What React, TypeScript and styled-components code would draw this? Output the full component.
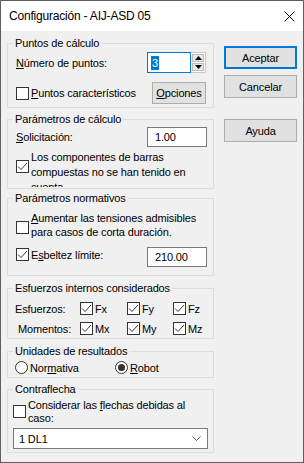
import React from 'react';
import styled, { createGlobalStyle } from 'styled-components';

const GlobalStyle = createGlobalStyle`
  html, body {
    margin: 0;
    padding: 0;
    background: #ffffff;
  }
  body {
    font-family: "Liberation Sans", Arial, sans-serif;
    font-size: 11px;
    letter-spacing: -0.15px;
    color: #000000;
  }
`;

const Window = styled.div`
  width: 304px;
  height: 463px;
  box-sizing: border-box;
  border: 1px solid #5f5f5f;
  background: #f0f0f0;
  display: flex;
  flex-direction: column;
`;

const TitleBar = styled.div`
  height: 30px;
  flex-shrink: 0;
  background: #ffffff;
  display: flex;
  align-items: center;
  justify-content: space-between;
  padding-left: 8px;
`;

const Title = styled.span`
  font-size: 12px;
  letter-spacing: -0.2px;
`;

const CloseBox = styled.div`
  width: 28px;
  height: 30px;
  display: flex;
  align-items: center;
  justify-content: center;
`;

const Body = styled.div`
  flex: 1;
  display: flex;
  gap: 10px;
  padding-left: 6px;
`;

const LeftCol = styled.div`
  width: 207px;
  display: flex;
  flex-direction: column;
`;

const RightCol = styled.div`
  width: 73px;
  display: flex;
  flex-direction: column;
`;

const Group = styled.div<{ $mt: number; $h: number }>`
  margin-top: ${(p) => p.$mt}px;
  height: ${(p) => p.$h}px;
  box-sizing: border-box;
  border: 1px solid #dcdcdc;
  display: flex;
  flex-direction: column;
`;

const Legend = styled.div`
  align-self: flex-start;
  height: 16px;
  line-height: 16px;
  margin: -9px 0 0 5px;
  padding: 0 2px;
  background: #f0f0f0;
  white-space: nowrap;
`;

const Row = styled.div<{ $mt?: number; $h?: number; $pl?: number; $pr?: number; $top?: boolean }>`
  display: flex;
  align-items: ${(p) => (p.$top ? 'flex-start' : 'center')};
  justify-content: space-between;
  margin-top: ${(p) => p.$mt ?? 0}px;
  height: ${(p) => (p.$h ? `${p.$h}px` : 'auto')};
  padding: 0 ${(p) => p.$pr ?? 0}px 0 ${(p) => p.$pl ?? 0}px;
`;

const GridRow = styled.div<{ $mt: number }>`
  display: grid;
  grid-template-columns: 65px 47px 46px 46px;
  align-items: center;
  height: 13px;
  margin-top: ${(p) => p.$mt}px;
  padding-left: 7px;
`;

const Label = styled.span<{ $ml?: number }>`
  white-space: nowrap;
  margin-left: ${(p) => p.$ml ?? 0}px;
`;

const CheckLabel = styled.div<{ $h?: number; $self?: string }>`
  display: flex;
  align-items: center;
  gap: 2px;
  height: ${(p) => (p.$h ? `${p.$h}px` : 'auto')};
  align-self: ${(p) => p.$self ?? 'auto'};
  white-space: nowrap;
`;

const MultiCheck = styled.div`
  display: flex;
  align-items: flex-start;
  gap: 2px;
`;

const Lines = styled.div<{ $lh: number; $clip?: number }>`
  line-height: ${(p) => p.$lh}px;
  white-space: nowrap;
  height: ${(p) => (p.$clip ? `${p.$clip}px` : 'auto')};
  overflow: hidden;
`;

const Box = styled.span<{ $mt?: number }>`
  width: 13px;
  height: 13px;
  box-sizing: border-box;
  flex-shrink: 0;
  border: 1px solid #333333;
  background: #ffffff;
  margin-top: ${(p) => p.$mt ?? 0}px;
  display: flex;
  align-items: center;
  justify-content: center;
`;

const RadioRing = styled.span`
  width: 13px;
  height: 13px;
  box-sizing: border-box;
  flex-shrink: 0;
  border: 1px solid #333333;
  border-radius: 50%;
  background: #ffffff;
  display: flex;
  align-items: center;
  justify-content: center;
`;

const RadioDot = styled.span`
  width: 7px;
  height: 7px;
  border-radius: 50%;
  background: #333333;
`;

const RadioItem = styled.div<{ $w?: number }>`
  display: flex;
  align-items: center;
  gap: 2px;
  width: ${(p) => (p.$w ? `${p.$w}px` : 'auto')};
`;

const RadioRow = styled.div`
  display: flex;
  height: 13px;
  margin-top: 2px;
  padding-left: 7px;
`;

const U = styled.span`
  text-decoration: underline;
  text-underline-offset: 1px;
`;

const Button = styled.div<{ $def?: boolean; $w?: number; $h?: number; $mt?: number }>`
  box-sizing: border-box;
  width: ${(p) => p.$w ?? 73}px;
  height: ${(p) => p.$h ?? 23}px;
  margin-top: ${(p) => p.$mt ?? 0}px;
  background: #e1e1e1;
  border: 1px solid ${(p) => (p.$def ? '#0078d7' : '#adadad')};
  box-shadow: ${(p) => (p.$def ? 'inset 0 0 0 1px #0078d7' : 'none')};
  display: flex;
  align-items: center;
  justify-content: center;
  white-space: nowrap;
`;

const Field = styled.div<{ $w: number }>`
  box-sizing: border-box;
  width: ${(p) => p.$w}px;
  height: 20px;
  border: 1px solid #7a7a7a;
  background: #ffffff;
  display: flex;
  align-items: center;
  padding-left: 7px;
`;

const Spinner = styled.div`
  display: flex;
  height: 21px;
`;

const SpinEdit = styled.div`
  box-sizing: border-box;
  width: 44px;
  height: 21px;
  border: 1px solid #0078d7;
  background: #ffffff;
  display: flex;
  align-items: center;
  padding-left: 3px;
`;

const Selected = styled.span`
  background: #0078d7;
  color: #ffffff;
  line-height: 14px;
  padding: 0 1px;
`;

const SpinButtons = styled.div`
  box-sizing: border-box;
  width: 15px;
  height: 21px;
  border: 1px solid #c9c9c9;
  border-left: none;
  background: #ffffff;
  display: flex;
  flex-direction: column;
  padding: 1px;
  gap: 1px;
`;

const SpinHalf = styled.div`
  flex: 1;
  background: #e8e8e8;
  border: 1px solid #bdbdbd;
  display: flex;
  align-items: center;
  justify-content: center;
`;

const Combo = styled.div`
  flex: 1;
  box-sizing: border-box;
  height: 21px;
  border: 1px solid #7a7a7a;
  background: #ffffff;
  display: flex;
  align-items: center;
  justify-content: space-between;
  padding: 0 6px 0 5px;
`;

const Check = () => (
  <svg width="11" height="11" viewBox="0 0 11 11">
    <polyline points="1,5.5 4,8.5 10,2" fill="none" stroke="#333" strokeWidth="1" />
  </svg>
);

const CheckBox = ({ checked, mt }: { checked?: boolean; mt?: number }) => (
  <Box $mt={mt}>{checked && <Check />}</Box>
);

const Arrow = ({ up }: { up?: boolean }) => (
  <svg width="7" height="4" viewBox="0 0 7 4">
    <polygon points={up ? '0,4 3.5,0 7,4' : '0,0 3.5,4 7,0'} fill="#000" />
  </svg>
);

const App = () => {
  return (
    <>
      <GlobalStyle />
      <Window>
        <TitleBar>
          <Title>Configuración - AIJ-ASD 05</Title>
          <CloseBox>
            <svg width="11" height="11" viewBox="0 0 11 11">
              <path d="M0.5 0.5 L10.5 10.5 M10.5 0.5 L0.5 10.5" stroke="#000" strokeWidth="1" />
            </svg>
          </CloseBox>
        </TitleBar>
        <Body>
          <LeftCol>
            <Group $mt={12} $h={65}>
              <Legend>Puntos de cálculo</Legend>
              <Row $mt={1} $h={21} $pl={8} $pr={7}>
                <Label>
                  <U>N</U>úmero de puntos:
                </Label>
                <Spinner>
                  <SpinEdit>
                    <Selected>3</Selected>
                  </SpinEdit>
                  <SpinButtons>
                    <SpinHalf>
                      <Arrow up />
                    </SpinHalf>
                    <SpinHalf>
                      <Arrow />
                    </SpinHalf>
                  </SpinButtons>
                </Spinner>
              </Row>
              <Row $mt={9} $h={22} $pl={8} $pr={7}>
                <CheckLabel>
                  <CheckBox />
                  <Label>
                    <U>P</U>untos característicos
                  </Label>
                </CheckLabel>
                <Button $w={54} $h={22}>
                  <U>O</U>pciones
                </Button>
              </Row>
            </Group>

            <Group $mt={11} $h={70}>
              <Legend>Parámetros de cálculo</Legend>
              <Row $h={20} $pl={8} $pr={6}>
                <Label>
                  <U>S</U>olicitación:
                </Label>
                <Field $w={60}>1.00</Field>
              </Row>
              <Row $mt={3} $pl={8} $top>
                <MultiCheck>
                  <CheckBox checked mt={10} />
                  <Lines $lh={15} $clip={37}>
                    Los componentes de barras
                    <br />
                    compuestas no se han tenido en
                    <br />
                    cuenta
                  </Lines>
                </MultiCheck>
              </Row>
            </Group>

            <Group $mt={9} $h={78}>
              <Legend>Parámetros normativos</Legend>
              <Row $mt={5} $pl={8} $top>
                <MultiCheck>
                  <CheckBox mt={10} />
                  <Lines $lh={14}>
                    <U>A</U>umentar las tensiones admisibles
                    <br />
                    para casos de corta duración.
                  </Lines>
                </MultiCheck>
              </Row>
              <Row $mt={8} $h={20} $pl={8} $pr={6} $top>
                <CheckLabel $h={15}>
                  <CheckBox checked />
                  <Label>
                    E<U>s</U>beltez límite:
                  </Label>
                </CheckLabel>
                <Field $w={60}>210.00</Field>
              </Row>
            </Group>

            <Group $mt={12} $h={51}>
              <Legend>Esfuerzos internos considerados</Legend>
              <GridRow $mt={6}>
                <Label>Esfuerzos:</Label>
                <CheckLabel>
                  <CheckBox checked />
                  <Label>Fx</Label>
                </CheckLabel>
                <CheckLabel>
                  <CheckBox checked />
                  <Label>Fy</Label>
                </CheckLabel>
                <CheckLabel>
                  <CheckBox checked />
                  <Label>Fz</Label>
                </CheckLabel>
              </GridRow>
              <GridRow $mt={7}>
                <Label $ml={3}>Momentos:</Label>
                <CheckLabel>
                  <CheckBox checked />
                  <Label>Mx</Label>
                </CheckLabel>
                <CheckLabel>
                  <CheckBox checked />
                  <Label>My</Label>
                </CheckLabel>
                <CheckLabel>
                  <CheckBox checked />
                  <Label>Mz</Label>
                </CheckLabel>
              </GridRow>
            </Group>

            <Group $mt={12} $h={27}>
              <Legend>Unidades de resultados</Legend>
              <RadioRow>
                <RadioItem $w={100}>
                  <RadioRing />
                  <Label>
                    Nor<U>m</U>ativa
                  </Label>
                </RadioItem>
                <RadioItem>
                  <RadioRing>
                    <RadioDot />
                  </RadioRing>
                  <Label>
                    <U>R</U>obot
                  </Label>
                </RadioItem>
              </RadioRow>
            </Group>

            <Group $mt={11} $h={64}>
              <Legend>Contraflecha</Legend>
              <Row $mt={2} $pl={5} $top>
                <MultiCheck>
                  <CheckBox mt={6} />
                  <Lines $lh={13}>
                    Considerar las <U>f</U>lechas debidas al
                    <br />
                    caso:
                  </Lines>
                </MultiCheck>
              </Row>
              <Row $mt={3} $pl={5} $pr={5}>
                <Combo>
                  <Label>1 DL1</Label>
                  <svg width="9" height="5" viewBox="0 0 9 5">
                    <polyline points="0.5,0.5 4.5,4.5 8.5,0.5" fill="none" stroke="#555" strokeWidth="1" />
                  </svg>
                </Combo>
              </Row>
            </Group>
          </LeftCol>

          <RightCol>
            <Button $def $mt={15}>
              Aceptar
            </Button>
            <Button $mt={6}>Cancelar</Button>
            <Button $mt={21}>Ayuda</Button>
          </RightCol>
        </Body>
      </Window>
    </>
  );
};

export default App;
